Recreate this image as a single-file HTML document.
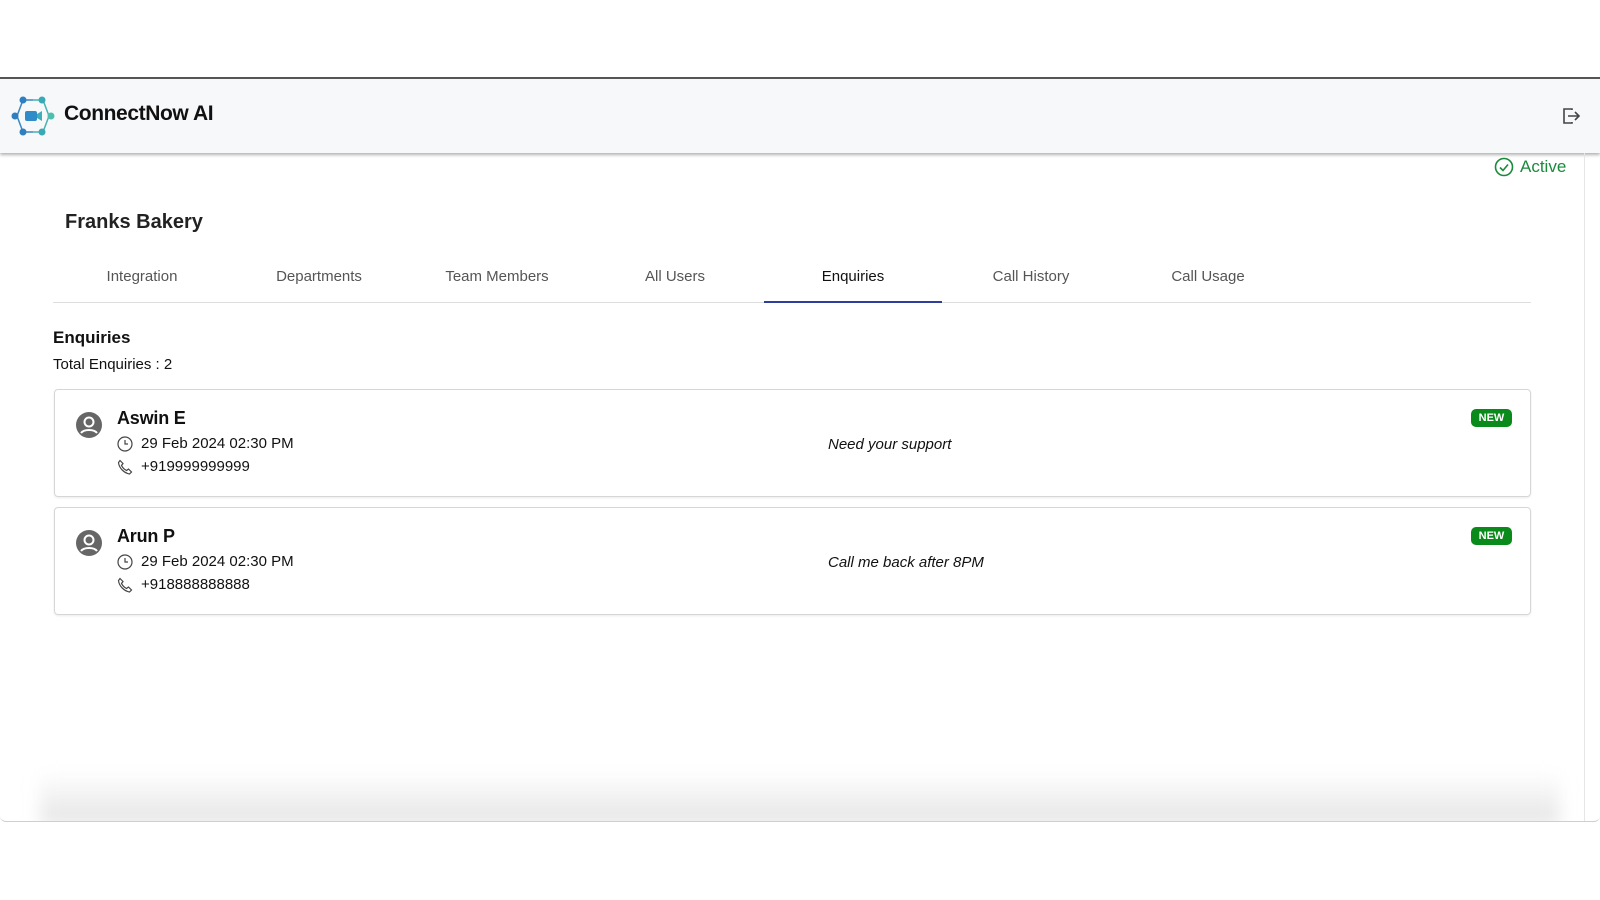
<!DOCTYPE html>
<html><head><style>
*{box-sizing:border-box;margin:0;padding:0}
body{width:1600px;height:900px;background:#fff;font-family:"Liberation Sans",Arial,sans-serif;color:#111;position:relative;overflow:hidden}
.frame{position:absolute;left:0;top:77px;width:1600px;height:745px;border-top:2px solid #555;border-bottom:1px solid #cfcfcf;background:#fff;border-radius:0 0 6px 6px;overflow:hidden}
.shadowb{position:absolute;left:40px;right:40px;bottom:-4px;height:54px;background:linear-gradient(#fff,#e4e4e4);filter:blur(8px)}
.header{position:absolute;left:0;top:0;width:1600px;height:74px;background:#f7f8fa;box-shadow:0 2px 3px rgba(0,0,0,.3)}
.brand{position:absolute;left:64px;top:23px;font-size:21px;font-weight:bold;letter-spacing:-.4px}
.rline{position:absolute;left:1584px;top:74px;width:1px;height:680px;background:#e6e6e6}
.active{position:absolute;left:1494px;top:78px;color:#1a8a3c;font-size:17px;display:flex;align-items:center;gap:6px}
.title{position:absolute;left:65px;top:132px;font-size:20px;font-weight:bold;color:#222}
.tabs{position:absolute;left:53px;top:172px;width:1478px;height:52px;border-bottom:1px solid #ddd}
.tab{position:absolute;top:0;width:178px;text-align:center;line-height:52px;font-size:15px;color:#555}
.tab.on{color:#111;border-bottom:2px solid #2f3d9c;height:52px}
.h{position:absolute;left:53px;top:249px;font-size:17px;font-weight:bold}
.tot{position:absolute;left:53px;top:277px;font-size:15px}
.card{position:absolute;left:54px;width:1477px;height:108px;border:1px solid #d6d6d6;border-radius:4px;box-shadow:0 1px 2px rgba(0,0,0,.08)}
.name{position:absolute;left:62px;top:18px;font-size:18px;font-weight:bold;letter-spacing:-.2px}
.ln{position:absolute;left:62px;font-size:15px;display:flex;align-items:center;gap:6px}
.msg{position:absolute;left:773px;top:46px;font-size:15px;font-style:italic}
.badge{position:absolute;left:1416px;top:19px;width:41px;height:18px;border-radius:5px;background:#0a8a1a;color:#fff;font-size:11px;font-weight:bold;text-align:center;line-height:18px}
.av{position:absolute;left:20px;top:21px}
</style></head><body>
<div class="frame">
<div class="shadowb"></div>
<div class="header">
<svg style="position:absolute;left:11px;top:16px" width="45" height="42" viewBox="0 0 45 42">
<polyline points="22,5 12,5 6,21 12,37 22,37" fill="none" stroke="#3a86c0" stroke-width="1.5"/>
<polyline points="22,5 32,5 38,21 32,37 22,37" fill="none" stroke="#46b3b0" stroke-width="1.5"/>
<circle cx="12" cy="5" r="3.5" fill="#2d7fc0"/><circle cx="31" cy="5" r="3.5" fill="#3aa9b6"/>
<circle cx="4" cy="21" r="3.5" fill="#2d7fc0"/><circle cx="40" cy="21" r="3.5" fill="#4cc0ad"/>
<circle cx="12" cy="37" r="3.5" fill="#2d7fc0"/><circle cx="31" cy="37" r="3.5" fill="#3aa9b6"/>
<rect x="14" y="16" width="12" height="10" rx="2" fill="#2f8cc8"/><polygon points="26,19 31,16 31,26 26,23" fill="#3cb0b8"/>
</svg>
<div class="brand">ConnectNow AI</div>
<svg style="position:absolute;left:1561px;top:27px" width="20" height="20" viewBox="0 0 20 20" fill="none" stroke="#444" stroke-width="1.6"><path d="M11 4V3H3v14h8v-1"/><path d="M7 10h11M14 6l4 4-4 4"/></svg>
</div>
<div class="rline"></div>
<div class="active"><svg width="20" height="20" viewBox="0 0 20 20" fill="none" stroke="#1a8a3c" stroke-width="1.6"><circle cx="10" cy="10" r="8.5"/><path d="M6 10.5l3 3 5-6"/></svg>Active</div>
<div class="title">Franks Bakery</div>
<div class="tabs">
<div class="tab" style="left:0">Integration</div>
<div class="tab" style="left:177px">Departments</div>
<div class="tab" style="left:355px">Team Members</div>
<div class="tab" style="left:533px">All Users</div>
<div class="tab on" style="left:711px">Enquiries</div>
<div class="tab" style="left:889px">Call History</div>
<div class="tab" style="left:1066px">Call Usage</div>
</div>
<div class="h">Enquiries</div>
<div class="tot">Total Enquiries : 2</div>
<div class="card" style="top:310px">
<svg class="av" width="28" height="28" viewBox="0 0 28 28"><circle cx="14" cy="14" r="13" fill="#666"/><circle cx="14" cy="11" r="4.5" fill="none" stroke="#fff" stroke-width="2"/><path d="M6 22c3-4 13-4 16 0" fill="none" stroke="#fff" stroke-width="2"/></svg>
<div class="name">Aswin E</div>
<div class="ln" style="top:45px;left:62px"><svg width="16" height="16" viewBox="0 0 16 16" fill="none" stroke="#444" stroke-width="1.2"><circle cx="8" cy="8" r="7"/><path d="M8 4v4h3"/></svg><span style="margin-left:2px">29 Feb 2024 02:30 PM</span></div>
<div class="ln" style="top:68px;left:62px"><svg width="16" height="16" viewBox="0 0 16 16" fill="none" stroke="#444" stroke-width="1.2"><path d="M3 1.5l3 3-1.5 2c1 2 3 4 5 5l2-1.5 3 3-2 2C7 14 2 9 1.5 3.5z"/></svg><span style="margin-left:2px">+919999999999</span></div>
<div class="msg">Need your support</div>
<div class="badge">NEW</div>
</div>
<div class="card" style="top:428px">
<svg class="av" width="28" height="28" viewBox="0 0 28 28"><circle cx="14" cy="14" r="13" fill="#666"/><circle cx="14" cy="11" r="4.5" fill="none" stroke="#fff" stroke-width="2"/><path d="M6 22c3-4 13-4 16 0" fill="none" stroke="#fff" stroke-width="2"/></svg>
<div class="name">Arun P</div>
<div class="ln" style="top:45px;left:62px"><svg width="16" height="16" viewBox="0 0 16 16" fill="none" stroke="#444" stroke-width="1.2"><circle cx="8" cy="8" r="7"/><path d="M8 4v4h3"/></svg><span style="margin-left:2px">29 Feb 2024 02:30 PM</span></div>
<div class="ln" style="top:68px;left:62px"><svg width="16" height="16" viewBox="0 0 16 16" fill="none" stroke="#444" stroke-width="1.2"><path d="M3 1.5l3 3-1.5 2c1 2 3 4 5 5l2-1.5 3 3-2 2C7 14 2 9 1.5 3.5z"/></svg><span style="margin-left:2px">+918888888888</span></div>
<div class="msg">Call me back after 8PM</div>
<div class="badge">NEW</div>
</div>
</div>
</body></html>
